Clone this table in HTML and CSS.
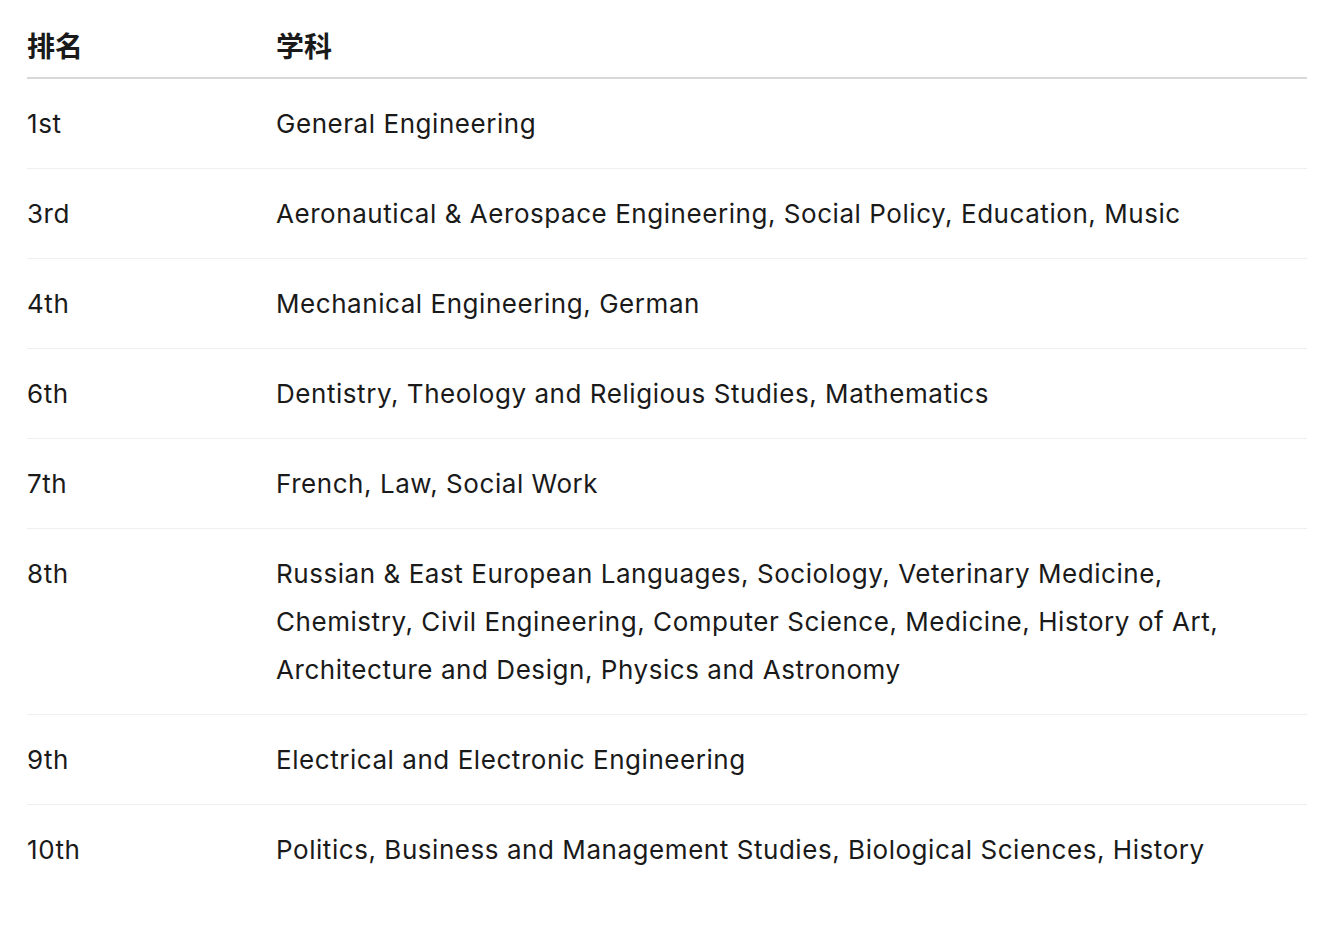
FILE: index.html
```html
<!DOCTYPE html>
<html lang="zh">
<head>
<meta charset="utf-8">
<link rel="stylesheet" href="styles.css">
</head>
<body>
<table class="rank-table">
  <thead>
    <tr><th class="col-rank">排名</th><th>学科</th></tr>
  </thead>
  <tbody>
    <tr><td>1st</td><td>General Engineering</td></tr>
    <tr><td>3rd</td><td>Aeronautical &amp; Aerospace Engineering, Social Policy, Education, Music</td></tr>
    <tr><td>4th</td><td>Mechanical Engineering, German</td></tr>
    <tr><td>6th</td><td>Dentistry, Theology and Religious Studies, Mathematics</td></tr>
    <tr><td>7th</td><td>French, Law, Social Work</td></tr>
    <tr><td>8th</td><td>Russian &amp; East European Languages, Sociology, Veterinary Medicine, Chemistry, Civil Engineering, Computer Science, Medicine, History of Art, Architecture and Design, Physics and Astronomy</td></tr>
    <tr><td>9th</td><td>Electrical and Electronic Engineering</td></tr>
    <tr><td>10th</td><td>Politics, Business and Management Studies, Biological Sciences, History</td></tr>
  </tbody>
</table>
</body>
</html>
```
FILE: styles.css
```css
html, body {
  margin: 0;
  padding: 0;
  background: #ffffff;
}
body {
  padding: 0 13px 0 27px;
  font-family: Inter, "Noto Sans", "Noto Sans CJK SC", sans-serif;
  font-size: 26px;
  letter-spacing: 0.55px;
  line-height: 48px;
  color: #1a1a1a;
}
.rank-table {
  width: 1280px;
  border-collapse: collapse;
}
.rank-table th {
  text-align: left;
  font-weight: 700;
  font-size: 28px;
  letter-spacing: 0;
  padding: 21px 0 8px 0;
  border-bottom: 2px solid #d8d8d8;
  font-family: "Noto Sans CJK SC", sans-serif;
}
.rank-table th.col-rank {
  width: 249px;
}
.rank-table td {
  vertical-align: top;
  padding: 21px 40px 20px 0;
  border-bottom: 1px solid #efefef;
}
.rank-table tbody tr:last-child td {
  border-bottom: none;
}
```
